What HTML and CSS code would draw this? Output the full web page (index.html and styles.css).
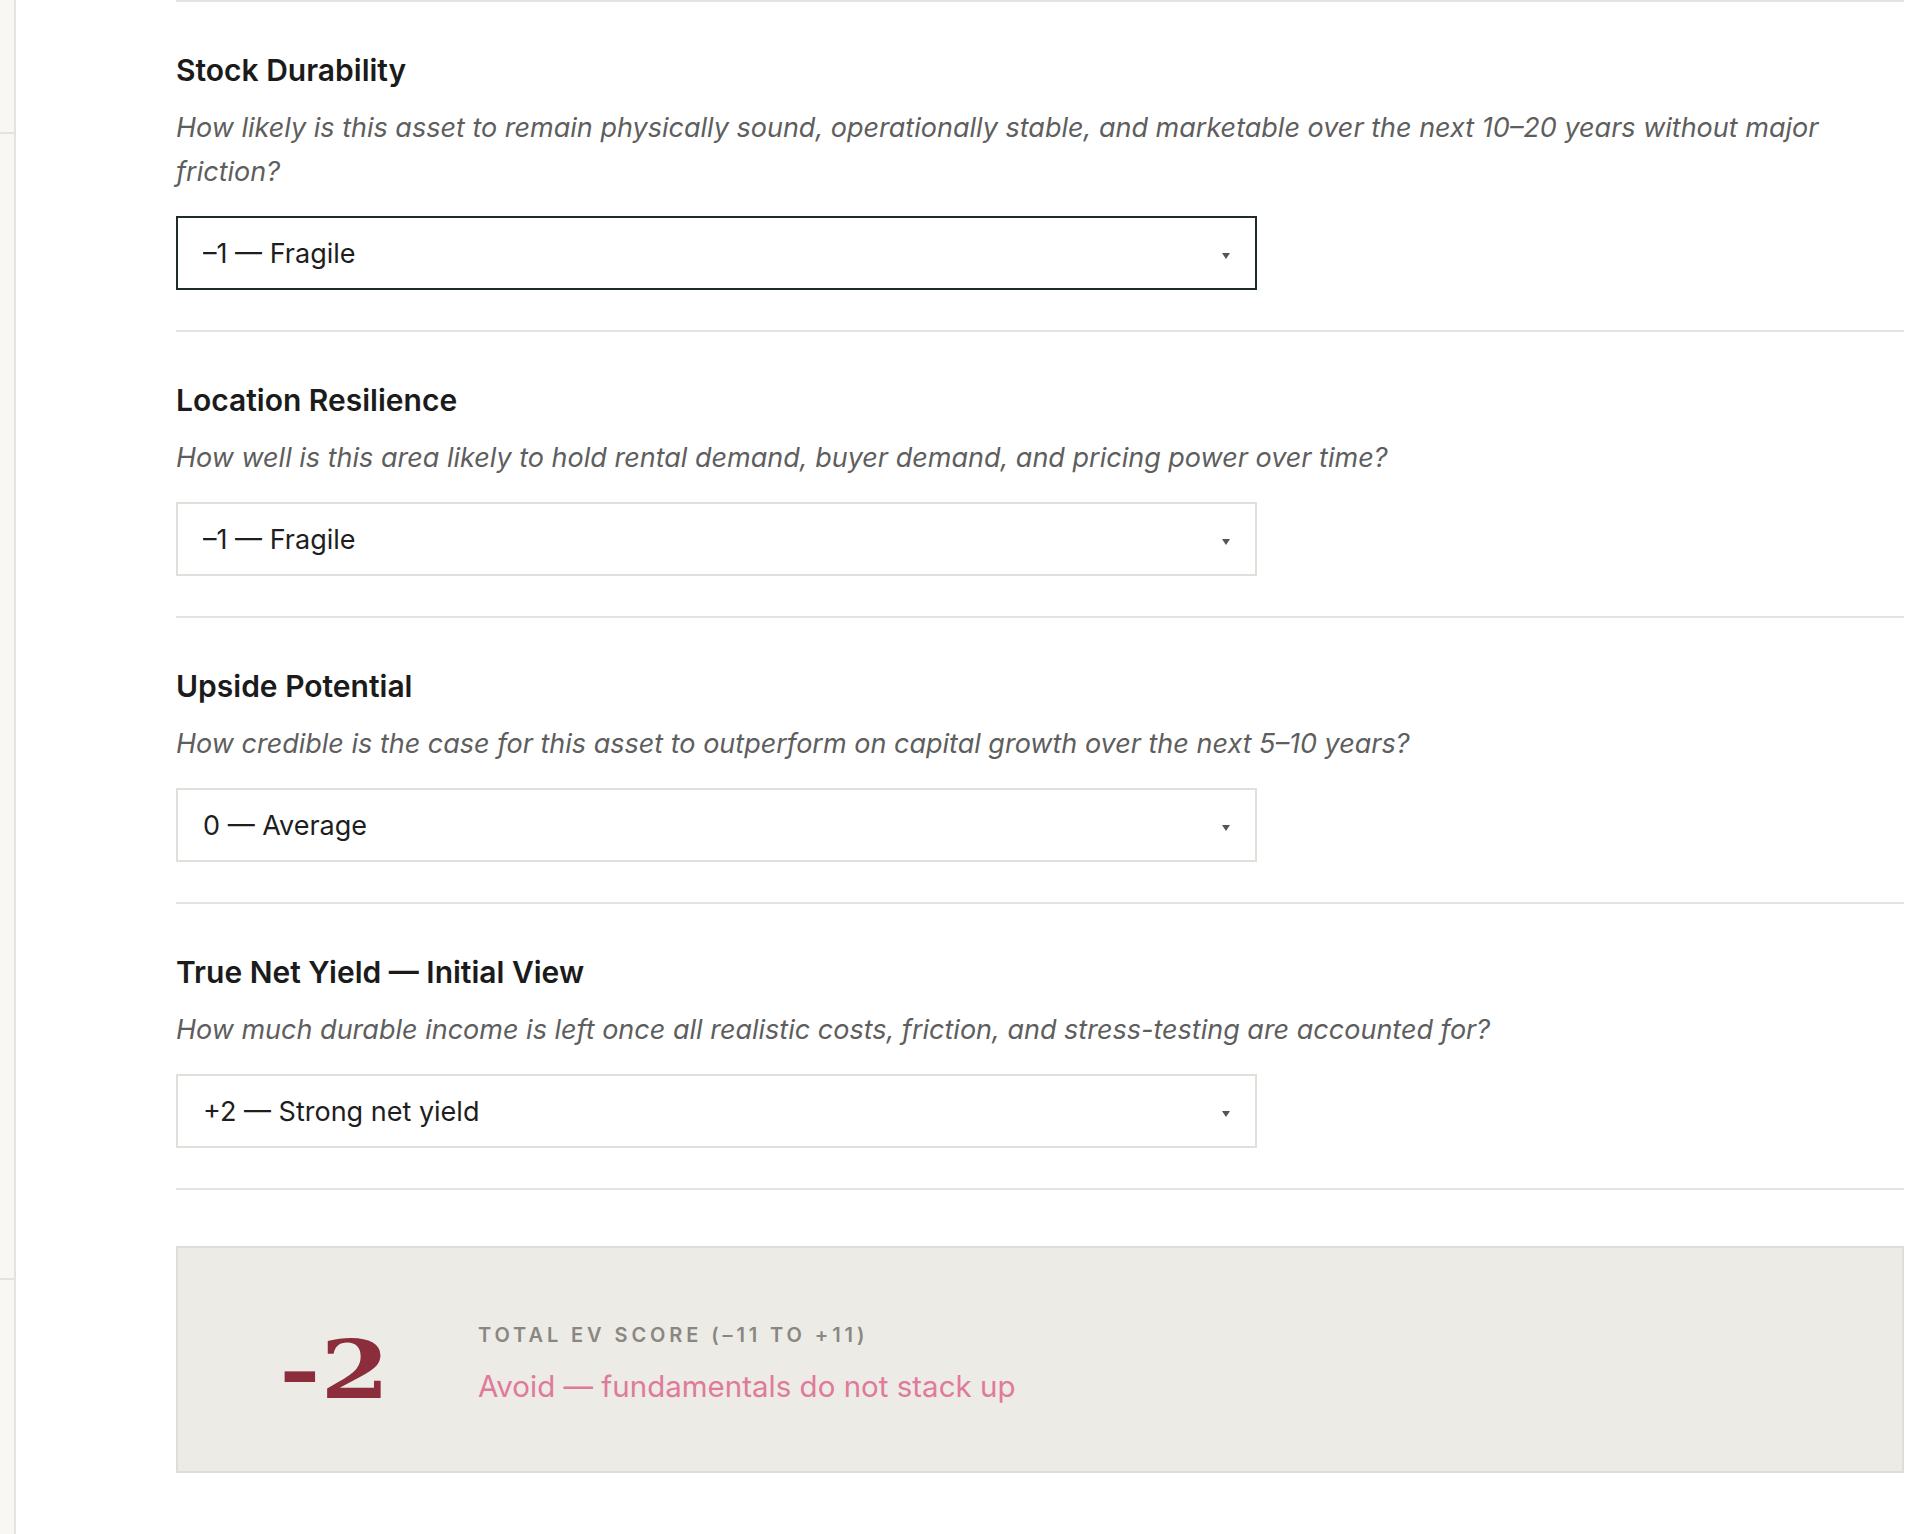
FILE: index.html
```html
<!DOCTYPE html>
<html lang="en">
<head>
    <meta charset="UTF-8">
    <meta name="viewport" content="width=device-width, initial-scale=1.0">
    <title>EV Score</title>
    <link rel="stylesheet" href="styles.css">
</head>
<body>

    <div class="page">
        <aside class="sidebar">
            <div class="side-block side-top"></div>
            <div class="side-block side-mid"></div>
            <div class="side-block"></div>
        </aside>

        <main class="main">
            <div class="questions">

                <section class="question">
                    <h3>Stock Durability</h3>
                    <p class="hint">How likely is this asset to remain physically sound, operationally stable, and marketable over the next 10–20 years without major friction?</p>
                    <div class="select-wrap active">
                        <select name="stock">
                            <option>–1 — Fragile</option>
                            <option>0 — Average</option>
                            <option>+1 — Durable</option>
                        </select>
                    </div>
                </section>

                <section class="question">
                    <h3>Location Resilience</h3>
                    <p class="hint">How well is this area likely to hold rental demand, buyer demand, and pricing power over time?</p>
                    <div class="select-wrap">
                        <select name="location">
                            <option>–1 — Fragile</option>
                            <option>0 — Average</option>
                            <option>+1 — Resilient</option>
                        </select>
                    </div>
                </section>

                <section class="question">
                    <h3>Upside Potential</h3>
                    <p class="hint">How credible is the case for this asset to outperform on capital growth over the next 5–10 years?</p>
                    <div class="select-wrap">
                        <select name="upside">
                            <option>0 — Average</option>
                            <option>–1 — Weak</option>
                            <option>+1 — Credible</option>
                        </select>
                    </div>
                </section>

                <section class="question">
                    <h3>True Net Yield — Initial View</h3>
                    <p class="hint">How much durable income is left once all realistic costs, friction, and stress-testing are accounted for?</p>
                    <div class="select-wrap">
                        <select name="yield">
                            <option>+2 — Strong net yield</option>
                            <option>+1 — Adequate net yield</option>
                            <option>0 — Thin net yield</option>
                        </select>
                    </div>
                </section>

            </div>

            <div class="score">
                <div class="score-value"><span>-2</span></div>
                <div class="score-text">
                    <div class="score-label">Total EV Score (–11 to +11)</div>
                    <div class="score-verdict">Avoid — fundamentals do not stack up</div>
                </div>
            </div>
        </main>
    </div>

</body>
</html>
```

FILE: styles.css
```css
body {
    margin: 0;
    font-family: Inter, "Noto Sans", sans-serif;
    background-color: #fff;
    color: #1b1b1b;
}

.page {
    display: flex;
    min-height: 1534px;
}

.sidebar {
    width: 14px;
    flex: none;
    display: flex;
    flex-direction: column;
    background-color: #f8f7f4;
    border-right: 2px solid #e6e2de;
}

.side-block {
    border-bottom: 2px solid #e6e2de;
}

.side-top {
    height: 132px;
}

.side-mid {
    height: 1144px;
}

.side-block:last-child {
    flex: 1;
    border-bottom: none;
}

.main {
    flex: 1;
    padding: 0 24px 0 160px;
}

.questions {
    border-top: 2px solid #e6e2de;
}

.question {
    padding: 50px 0 40px;
    border-bottom: 2px solid #e6e2de;
}

.question h3 {
    margin: 0 0 18px;
    font-size: 30px;
    line-height: 36px;
    font-weight: 600;
    color: #1b1b1b;
}

.hint {
    margin: 0 0 22px;
    font-size: 27px;
    line-height: 44px;
    font-style: italic;
    color: #5e5e5e;
}

.select-wrap {
    position: relative;
    width: 1081px;
}

.select-wrap select {
    display: block;
    width: 100%;
    height: 74px;
    padding: 0 60px 0 25px;
    font-family: Inter, "Noto Sans", sans-serif;
    font-size: 27px;
    color: #1e1e1e;
    background-color: #fff;
    border: 2px solid #e2ded9;
    border-radius: 0;
    appearance: none;
    -webkit-appearance: none;
    outline: none;
}

.select-wrap.active select {
    border-color: #1f2c2c;
}

.select-wrap::after {
    content: "";
    position: absolute;
    right: 27px;
    top: 37px;
    border-left: 4px solid transparent;
    border-right: 4px solid transparent;
    border-top: 6px solid #555;
    pointer-events: none;
}

.score {
    margin-top: 56px;
    height: 223px;
    display: grid;
    grid-template-columns: 300px 1fr;
    align-items: center;
    background-color: #edebe6;
    border: 2px solid #e1dcd7;
}

.score-value {
    text-align: center;
    padding: 20px 0 0 12px;
    font-family: "DejaVu Serif", "Liberation Serif", serif;
    font-weight: bold;
    font-size: 80px;
    line-height: 84px;
    color: #8b2d3a;
}

.score-value span {
    display: inline-block;
    transform: scaleX(1.24);
}

.score-text {
    display: flex;
    flex-direction: column;
    gap: 20px;
    padding-top: 8px;
}

.score-label {
    font-size: 20px;
    line-height: 24px;
    font-weight: 600;
    letter-spacing: 3.9px;
    text-transform: uppercase;
    color: #8a8782;
}

.score-verdict {
    font-size: 29.5px;
    line-height: 38px;
    color: #e07a9b;
}
```
